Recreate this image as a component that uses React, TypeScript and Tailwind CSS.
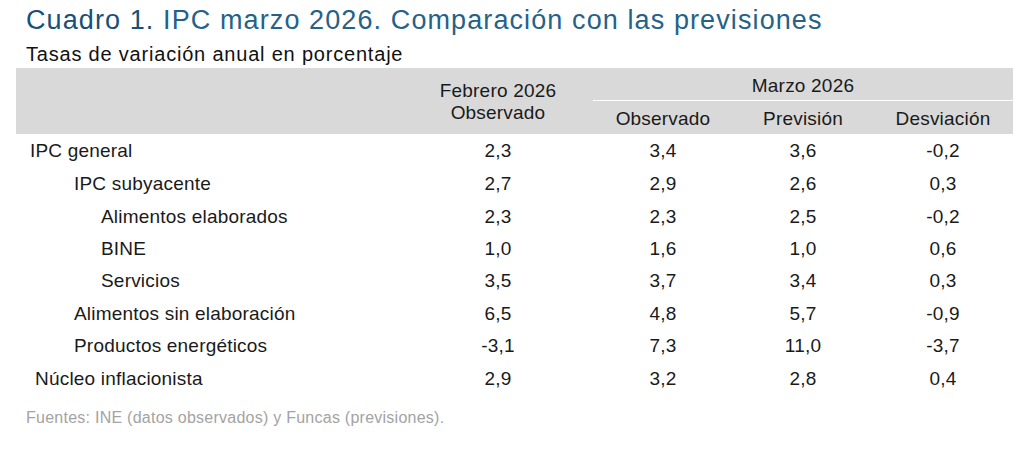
const rows: { label: string; indent: string; values: string[] }[] = [
  { label: "IPC general", indent: "pl-[14px]", values: ["2,3", "3,4", "3,6", "-0,2"] },
  { label: "IPC subyacente", indent: "pl-[58px]", values: ["2,7", "2,9", "2,6", "0,3"] },
  { label: "Alimentos elaborados", indent: "pl-[85px]", values: ["2,3", "2,3", "2,5", "-0,2"] },
  { label: "BINE", indent: "pl-[85px]", values: ["1,0", "1,6", "1,0", "0,6"] },
  { label: "Servicios", indent: "pl-[85px]", values: ["3,5", "3,7", "3,4", "0,3"] },
  { label: "Alimentos sin elaboración", indent: "pl-[58px]", values: ["6,5", "4,8", "5,7", "-0,9"] },
  { label: "Productos energéticos", indent: "pl-[58px]", values: ["-3,1", "7,3", "11,0", "-3,7"] },
  { label: "Núcleo inflacionista", indent: "pl-[19px]", values: ["2,9", "3,2", "2,8", "0,4"] },
];

export default function App() {
  return (
    <div className="min-h-[453px] w-[1024px] bg-white font-['Liberation_Sans',Arial,sans-serif]">
      {/* Title */}
      <div className="pl-[26px] pt-[5px]">
        <h1 className="text-[27px] leading-[31px] tracking-[1.1px] text-[#256288]">
          <span className="text-[#17507a]">Cuadro 1.</span> IPC marzo 2026. Comparación con las previsiones
        </h1>
        <p className="mt-[7px] text-[20px] leading-[22px] tracking-[0.8px] text-[#111]">
          Tasas de variación anual en porcentaje
        </p>
      </div>

      {/* Table */}
      <table className="ml-[16px] mt-[3px] w-[997px] table-fixed border-collapse text-[19px] tracking-[0.2px] text-[#1a1a1a]">
        <colgroup>
          <col className="w-[387px]" />
          <col className="w-[190px]" />
          <col className="w-[140px]" />
          <col className="w-[140px]" />
          <col className="w-[140px]" />
        </colgroup>
        <thead className="bg-[#d9d9d9] font-normal">
          <tr className="h-[32px]">
            <th rowSpan={2} />
            <th rowSpan={2} className="align-middle pt-[1px] text-center font-normal leading-[22px]">
              Febrero 2026
              <br />
              Observado
            </th>
            <th colSpan={3} className="border-b border-white pt-[4px] text-center font-normal leading-[22px]">
              Marzo 2026
            </th>
          </tr>
          <tr className="h-[34px]">
            <th className="pt-[3px] text-center font-normal">Observado</th>
            <th className="pt-[3px] text-center font-normal">Previsión</th>
            <th className="pt-[3px] text-center font-normal">Desviación</th>
          </tr>
        </thead>
        <tbody>
          {rows.map((row, i) => (
            <tr key={i} className={i === 0 ? "h-[34px]" : "h-[32.4px]"}>
              <td className={`${row.indent} leading-[22px]`}>{row.label}</td>
              {row.values.map((v, j) => (
                <td key={j} className="text-center leading-[22px]">
                  {v}
                </td>
              ))}
            </tr>
          ))}
        </tbody>
      </table>

      <p className="mt-[13px] pl-[26px] text-[16px] leading-[20px] tracking-[0.25px] text-[#a3a3a3]">
        Fuentes: INE (datos observados) y Funcas (previsiones).
      </p>
    </div>
  );
}
